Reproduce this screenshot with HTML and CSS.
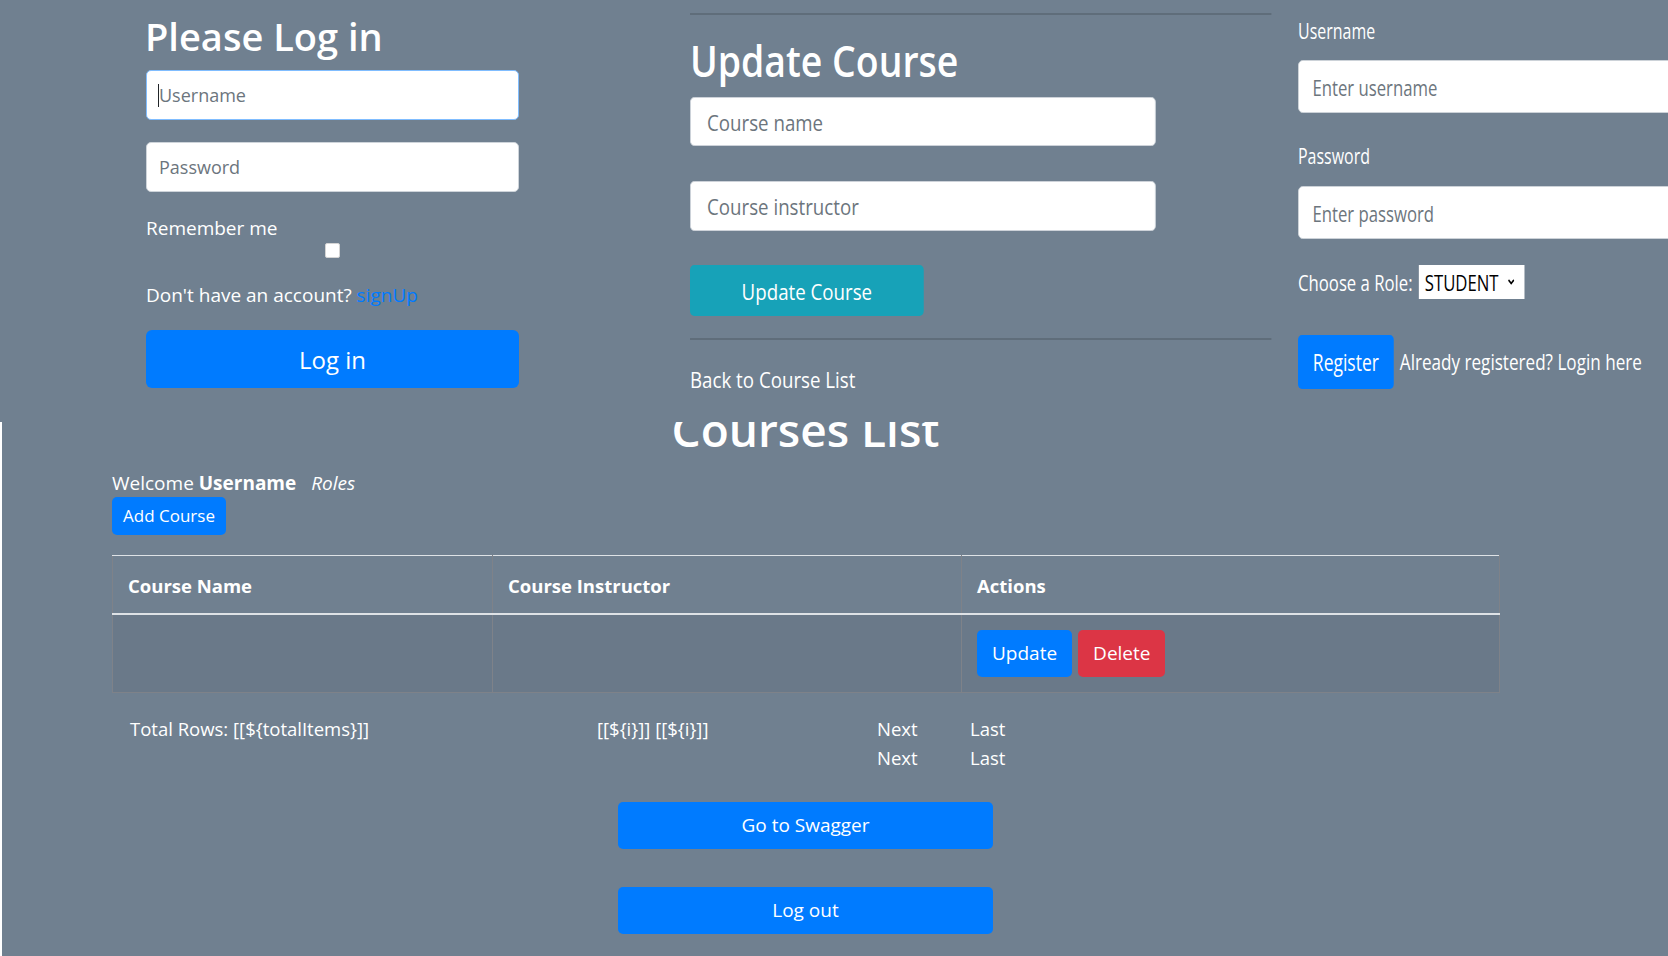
FILE: index.html
```html
<!DOCTYPE html>
<html lang="en">
<head>
<meta charset="utf-8">
<title>Courses</title>
<link rel="stylesheet" href="styles.css">
</head>
<body>
<div class="top">
  <form class="login">
    <h1 class="login-title">Please Log in</h1>
    <div class="caret-wrap"><input class="field field-focus" type="text" placeholder="Username"></div>
    <input class="field field-pw" type="password" placeholder="Password">
    <label class="remember">Remember me</label>
    <div class="check-row"><input class="check" type="checkbox"></div>
    <p class="signup">Don't have an account? <a href="#">signUp</a></p>
    <button class="btn btn-primary btn-login" type="button">Log in</button>
  </form>

  <div class="update-col">
    <div class="update">
      <hr class="rule">
      <h1 class="update-title">Update Course</h1>
      <input class="ufield" type="text" placeholder="Course name">
      <input class="ufield ufield-2" type="text" placeholder="Course instructor">
      <button class="btn btn-info btn-update-course" type="button">Update Course</button>
      <hr class="rule rule-2">
      <a class="back" href="#">Back to Course List</a>
    </div>
  </div>

  <div class="reg-col">
    <div class="reg">
      <label class="rlabel">Username</label>
      <input class="rfield" type="text" placeholder="Enter username">
      <label class="rlabel rlabel-2">Password</label>
      <input class="rfield rfield-2" type="password" placeholder="Enter password">
      <div class="role-row">
        <span>Choose a Role:</span>
        <span class="select">STUDENT<svg width="9" height="6" viewBox="0 0 9 6"><path d="M1 1 L4.5 4.5 L8 1" fill="none" stroke="#000" stroke-width="1.8"/></svg></span>
      </div>
      <div class="reg-row">
        <button class="btn btn-primary btn-register" type="button">Register</button>
        <a class="login-link" href="#">Already registered? Login here</a>
      </div>
    </div>
  </div>
</div>

<div class="bottom">
  <div class="list">
    <div class="title-clip"><h1 class="list-title">Courses List</h1></div>
    <p class="welcome">Welcome <b>Username</b> <i>Roles</i></p>
    <button class="btn btn-primary btn-add" type="button">Add Course</button>

    <table class="courses">
      <colgroup><col class="w1"><col class="w2"><col class="w3"></colgroup>
      <thead>
        <tr><th>Course Name</th><th>Course Instructor</th><th>Actions</th></tr>
      </thead>
      <tbody>
        <tr>
          <td></td>
          <td></td>
          <td><div class="cell-actions"><button class="btn btn-primary btn-row" type="button">Update</button><button class="btn btn-danger btn-row" type="button">Delete</button></div></td>
        </tr>
      </tbody>
    </table>

    <div class="pager">
      <span>Total Rows: [[${totalItems}]]</span>
      <span>[[${i}]] [[${i}]]</span>
      <span>Next</span>
      <span>Last</span>
      <span></span>
      <span></span>
      <span>Next</span>
      <span>Last</span>
    </div>

    <div class="actions">
      <button class="btn btn-primary btn-wide" type="button">Go to Swagger</button>
      <button class="btn btn-primary btn-wide" type="button">Log out</button>
    </div>
  </div>
</div>
</body>
</html>
```

FILE: styles.css
```css
* { box-sizing: border-box; }

html, body {
  margin: 0;
  height: 100%;
  overflow: hidden;
}

body {
  background: #708090;
  color: #fff;
  font-family: "Open Sans", "Noto Sans", "Liberation Sans", sans-serif;
}

/* ---------- generic buttons ---------- */
.btn {
  display: flex;
  align-items: center;
  justify-content: center;
  border: 0;
  border-radius: 5px;
  padding: 0;
  color: #fff;
  font-family: "Open Sans", "Noto Sans", sans-serif;
  cursor: pointer;
}
.btn-primary { background: #007bff; }
.btn-info { background: #17a2b8; }
.btn-danger { background: #dc3545; }

/* ---------- top collage strip ---------- */
.top {
  display: flex;
  align-items: flex-start;
  height: 413px;
  overflow: hidden;
  padding-left: 146px;
}

/* login column */
.login {
  flex: none;
  width: 373px;
  padding-top: 12px;
}
.login-title {
  margin: 0 0 0 -1px;
  font-size: 38px;
  font-weight: 600;
  line-height: 48px;
}
.field {
  display: block;
  width: 100%;
  height: 50px;
  margin: 0;
  padding: 0 12px;
  border: 1px solid #ced4da;
  border-radius: 5px;
  background: #fff;
  color: #495057;
  font: 18px "Open Sans", "Noto Sans", sans-serif;
  outline: none;
}
.field::placeholder { color: #6c757d; opacity: 1; }
.caret-wrap {
  position: relative;
  margin-top: 10px;
}
.caret-wrap .field { border-color: #80bdff; }
.caret-wrap::after {
  content: "";
  position: absolute;
  left: 12px;
  top: 14px;
  width: 1px;
  height: 23px;
  background: #212529;
}
.field-pw { margin-top: 22px; }
.remember {
  display: block;
  margin-top: 22px;
  font-size: 19px;
  line-height: 28px;
}
.check-row {
  display: flex;
  justify-content: center;
  height: 16px;
  margin-top: 1px;
}
.check {
  appearance: none;
  -webkit-appearance: none;
  margin: 0;
  width: 15px;
  height: 15px;
  background: #fff;
  border: 1px solid #d4d4d4;
  border-radius: 2px;
}
.signup {
  margin: 22px 0 0;
  font-size: 19px;
  line-height: 28px;
}
.signup a { color: #007bff; text-decoration: none; }
.btn-login {
  width: 100%;
  height: 58px;
  margin-top: 21px;
  font-size: 24px;
  border-radius: 6px;
}

/* update course column */
.update-col {
  flex: none;
  width: 581px;
  margin-left: 171px;
}
.update {
  width: 683.5px;
  padding-top: 13px;
  transform: scaleX(0.85);
  transform-origin: 0 0;
}
.rule {
  margin: 0;
  border: 0;
  border-top: 2px solid rgba(0, 0, 0, 0.15);
}
.update-title {
  margin: 17.5px 0 0;
  font-size: 44px;
  font-weight: 600;
  line-height: 54px;
}
.ufield {
  display: block;
  width: 548px;
  height: 49px;
  margin-top: 10.5px;
  padding: 0 19px;
  border: 1px solid #ced4da;
  border-radius: 5px;
  background: #fff;
  color: #495057;
  font: 22px "Open Sans", "Noto Sans", sans-serif;
  outline: none;
}
.ufield::placeholder { color: #6c757d; opacity: 1; }
.ufield-2 { margin-top: 35px; height: 50px; }
.btn-update-course {
  width: 275px;
  height: 51px;
  margin-top: 34px;
  font-size: 22px;
}
.rule-2 { margin-top: 22px; }
.back {
  display: block;
  margin-top: 23.5px;
  color: #fff;
  font-size: 22px;
  line-height: 30px;
  text-decoration: none;
}

/* register column */
.reg-col {
  flex: 1;
  min-width: 0;
  margin-left: 27px;
}
.reg {
  width: 700px;
  padding-top: 16px;
  transform: scaleX(0.76);
  transform-origin: 0 0;
}
.rlabel {
  display: block;
  font-size: 21px;
  line-height: 30px;
}
.rlabel-2 { margin-top: 28px; }
.rfield {
  display: block;
  width: 100%;
  height: 53px;
  margin-top: 14px;
  padding: 0 18px;
  border: 1px solid #ced4da;
  border-radius: 6px;
  background: #fff;
  color: #495057;
  font: 22px "Open Sans", "Noto Sans", sans-serif;
  outline: none;
}
.rfield::placeholder { color: #6c757d; opacity: 1; }
.rfield-2 { margin-top: 15px; }
.role-row {
  display: flex;
  align-items: center;
  gap: 8px;
  height: 34px;
  margin-top: 26px;
  font-size: 22px;
  line-height: 30px;
}
.select {
  display: flex;
  align-items: center;
  width: 139.5px;
  height: 34px;
  padding-left: 8px;
  background: #fff;
  color: #000;
}
.select svg { margin-left: 12px; }
.reg-row {
  display: flex;
  align-items: center;
  gap: 8px;
  margin-top: 36px;
  font-size: 22.5px;
  line-height: 30px;
}
.btn-register {
  width: 126px;
  height: 54px;
  font-size: 23px;
}
.login-link { color: #fff; text-decoration: none; }

/* ---------- bottom: courses list ---------- */
.bottom {
  height: 543px;
  border-left: 2px solid #fff;
}
.list {
  width: 1387px;
  margin-left: 110px;
}
.title-clip {
  height: 36px;
  margin-top: 9px;
  overflow: hidden;
}
.list-title {
  margin: -20px 0 0;
  font-size: 46px;
  font-weight: 600;
  line-height: 54px;
  text-align: center;
}
.welcome {
  margin: 10.5px 0 0;
  font-size: 19px;
  line-height: 28px;
}
.welcome i { margin-left: 10px; }
.btn-add {
  width: fit-content;
  height: 38px;
  padding: 0 11px;
  font-size: 17px;
}

.courses {
  width: 1387px;
  margin-top: 20px;
  table-layout: fixed;
  border-collapse: collapse;
}
.courses .w1 { width: 380px; }
.courses .w2 { width: 469px; }
.courses .w3 { width: 538px; }
.courses th,
.courses td {
  border-left: 1px solid #7e8289;
  border-right: 1px solid #7e8289;
  text-align: left;
}
.courses th {
  padding: 16px 15px 14px;
  border-top: 1px solid #dee2e6;
  border-bottom: 2px solid #dee2e6;
  font-size: 18.5px;
  font-weight: 700;
  line-height: 27px;
}
.courses td {
  padding: 15px;
  border-bottom: 1px solid #7e8289;
  background: #6a7989;
}
.cell-actions {
  display: flex;
  gap: 6px;
}
.btn-row {
  height: 47px;
  padding: 0 15px;
  font-size: 19px;
}

.pager {
  display: grid;
  grid-template-columns: 467px 280px 93px auto;
  margin-top: 21px;
  padding-left: 18px;
  font-size: 18.5px;
  line-height: 29px;
}

.actions {
  display: flex;
  flex-direction: column;
  align-items: center;
  gap: 38px;
  margin-top: 30px;
}
.btn-wide {
  width: 375px;
  height: 47px;
  font-size: 19px;
}
```
